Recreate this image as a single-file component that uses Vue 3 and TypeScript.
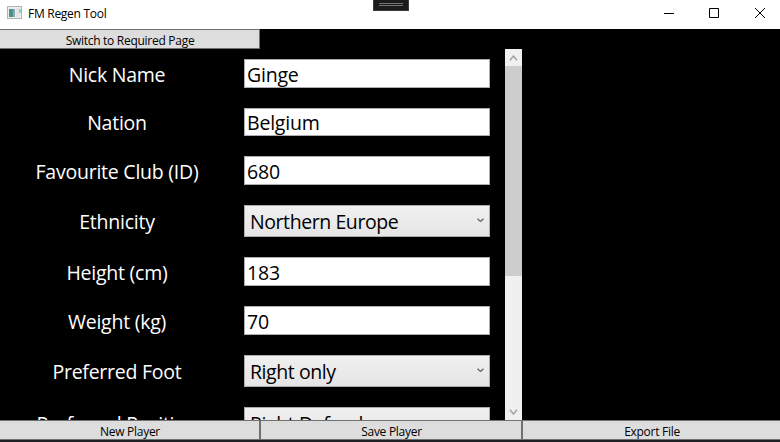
<script setup lang="ts">
import { ref } from 'vue'

interface Field {
  label: string
  value: string
  kind: 'text' | 'select'
  height: number
}

const fields = ref<Field[]>([
  { label: 'Nick Name', value: 'Ginge', kind: 'text', height: 29 },
  { label: 'Nation', value: 'Belgium', kind: 'text', height: 28 },
  { label: 'Favourite Club (ID)', value: '680', kind: 'text', height: 29 },
  { label: 'Ethnicity', value: 'Northern Europe', kind: 'select', height: 32 },
  { label: 'Height (cm)', value: '183', kind: 'text', height: 29 },
  { label: 'Weight (kg)', value: '70', kind: 'text', height: 29 },
  { label: 'Preferred Foot', value: 'Right only', kind: 'select', height: 32 },
  { label: 'Preferred Position', value: 'Right Defender', kind: 'select', height: 32 },
])
</script>

<template>
  <div class="window">
    <header class="titlebar">
      <svg class="app-icon" width="16" height="14" viewBox="0 0 16 14">
        <rect x="0.5" y="0.5" width="14" height="12" fill="#eceeee" stroke="#b0b4b4" />
        <rect x="2" y="3" width="5" height="8" fill="#4f9088" />
        <rect x="6" y="3" width="2" height="8" fill="#8fa9b4" />
        <rect x="9" y="2" width="3" height="9" fill="#e4e2e6" />
        <rect x="12" y="3" width="2" height="4" fill="#8fd0b8" />
      </svg>
      <span class="title">FM Regen Tool</span>
      <div class="debug-grip"><i></i><i></i></div>
      <div class="controls">
        <svg width="10" height="10" viewBox="0 0 10 10"><path d="M0 5.5H10" /></svg>
        <svg width="10" height="10" viewBox="0 0 10 10"><path d="M.5 .5H9.5V9.5H.5Z" /></svg>
        <svg class="close" width="10" height="10" viewBox="0 0 10 10"><path d="M0 0L10 10M10 0L0 10" /></svg>
      </div>
    </header>

    <button class="btn switch"><span>Switch to Required Page</span></button>

    <main class="scroller">
      <div class="form">
        <div v-for="f in fields" :key="f.label" class="row" :style="{ height: f.height + 'px' }">
          <div class="label">{{ f.label }}</div>
          <div class="box" :class="f.kind">
            <span>{{ f.value }}</span>
            <svg v-if="f.kind === 'select'" width="7" height="5" viewBox="0 0 7 5">
              <path d="M.5 .7L3.5 3.5L6.5 .7" />
            </svg>
          </div>
        </div>
      </div>
      <div class="scrollbar">
        <svg width="9" height="6" viewBox="0 0 9 6"><path d="M1 5.2L4.5 1L8 5.2" /></svg>
        <div class="thumb"></div>
        <svg width="9" height="6" viewBox="0 0 9 6"><path d="M1 .8L4.5 5L8 .8" /></svg>
      </div>
    </main>

    <footer class="actions">
      <button class="btn"><span>New Player</span></button>
      <button class="btn"><span>Save Player</span></button>
      <button class="btn"><span>Export File</span></button>
    </footer>
  </div>
</template>

<style>
body {
  margin: 0;
  background: #000;
}
</style>

<style scoped>
.window {
  width: 780px;
  height: 442px;
  overflow: hidden;
  display: flex;
  flex-direction: column;
  background: #000;
  font-family: 'Open Sans', 'Noto Sans', sans-serif;
  box-sizing: border-box;
}
.titlebar {
  position: relative;
  flex: 0 0 29px;
  display: flex;
  align-items: center;
  background: #fff;
  padding-left: 7px;
  box-sizing: border-box;
}
.app-icon {
  margin-top: -3px;
}
.title {
  margin-left: 5px;
  margin-top: -2px;
  font-size: 12px;
  letter-spacing: -0.28px;
  color: #000;
}
.debug-grip {
  position: absolute;
  left: 373px;
  top: 0;
  width: 36px;
  height: 11px;
  box-sizing: border-box;
  border: 1px solid #3c3c3c;
  border-top: 0;
  background: #1c1c1c;
  padding: 3px 5px 0;
}
.debug-grip i {
  display: block;
  height: 1px;
  margin-bottom: 1px;
  background: #747474;
}
.controls {
  margin-left: auto;
  display: flex;
  gap: 35px;
  padding-right: 15px;
  margin-top: -3px;
}
.controls svg {
  display: block;
  overflow: visible;
  fill: none;
  stroke: #000;
  stroke-width: 1;
}
.controls .close {
  margin-left: 1px;
}
.btn {
  display: flex;
  align-items: center;
  justify-content: center;
  box-sizing: border-box;
  margin: 0;
  padding: 0;
  border: 1px solid #707070;
  border-radius: 0;
  background: #ddd;
  color: #000;
  font-family: inherit;
  font-size: 12px;
  line-height: 14px;
  letter-spacing: -0.28px;
}
.switch {
  flex: 0 0 20px;
  width: 260px;
  border-left: 0;
}
.btn span {
  padding: 3px 0 0 1px;
}
.scroller {
  flex: 0 0 371px;
  width: 522px;
  display: flex;
  overflow: hidden;
}
.form {
  flex: 1;
  display: flex;
  flex-direction: column;
  gap: 20px;
  padding-top: 10px;
}
.row {
  flex: none;
  display: grid;
  grid-template-columns: 234px 246px;
  grid-template-rows: 100%;
  column-gap: 10px;
  align-items: stretch;
}
.label,
.box {
  display: flex;
  align-items: center;
  font-size: 19.5px;
  line-height: 24px;
  white-space: nowrap;
}
.label {
  justify-content: center;
  color: #fff;
  padding-top: 2px;
  letter-spacing: -0.24px;
}
.box {
  box-sizing: border-box;
  border: 1px solid #abadb3;
  background: #fff;
  color: #000;
  padding: 2px 5px 0 2px;
  letter-spacing: -0.2px;
}
.box.select {
  justify-content: space-between;
  border-color: #acacac;
  background: linear-gradient(#f0f0f0, #e5e5e5);
  padding-left: 5px;
  letter-spacing: -0.42px;
}
.box svg {
  fill: none;
  stroke: #606060;
  stroke-width: 1.2;
  margin-top: -3px;
}
.scrollbar {
  width: 17px;
  display: flex;
  flex-direction: column;
  align-items: center;
  background: #f0f0f0;
  padding: 6px 0 5px;
  box-sizing: border-box;
}
.scrollbar svg {
  flex: none;
  fill: none;
  stroke: #a0a0a0;
  stroke-width: 1.4;
}
.scrollbar svg:last-child {
  margin-top: auto;
}
.thumb {
  width: 17px;
  height: 210px;
  margin-top: 5px;
  background: #cdcdcd;
}
.actions {
  flex: 0 0 22px;
  display: grid;
  grid-template-columns: 260px 262px 258px;
  grid-template-rows: 20px;
  background: #1e1f22;
}
.actions .btn:first-child {
  border-left: 0;
}
.actions .btn:last-child {
  border-right: 0;
}
</style>
